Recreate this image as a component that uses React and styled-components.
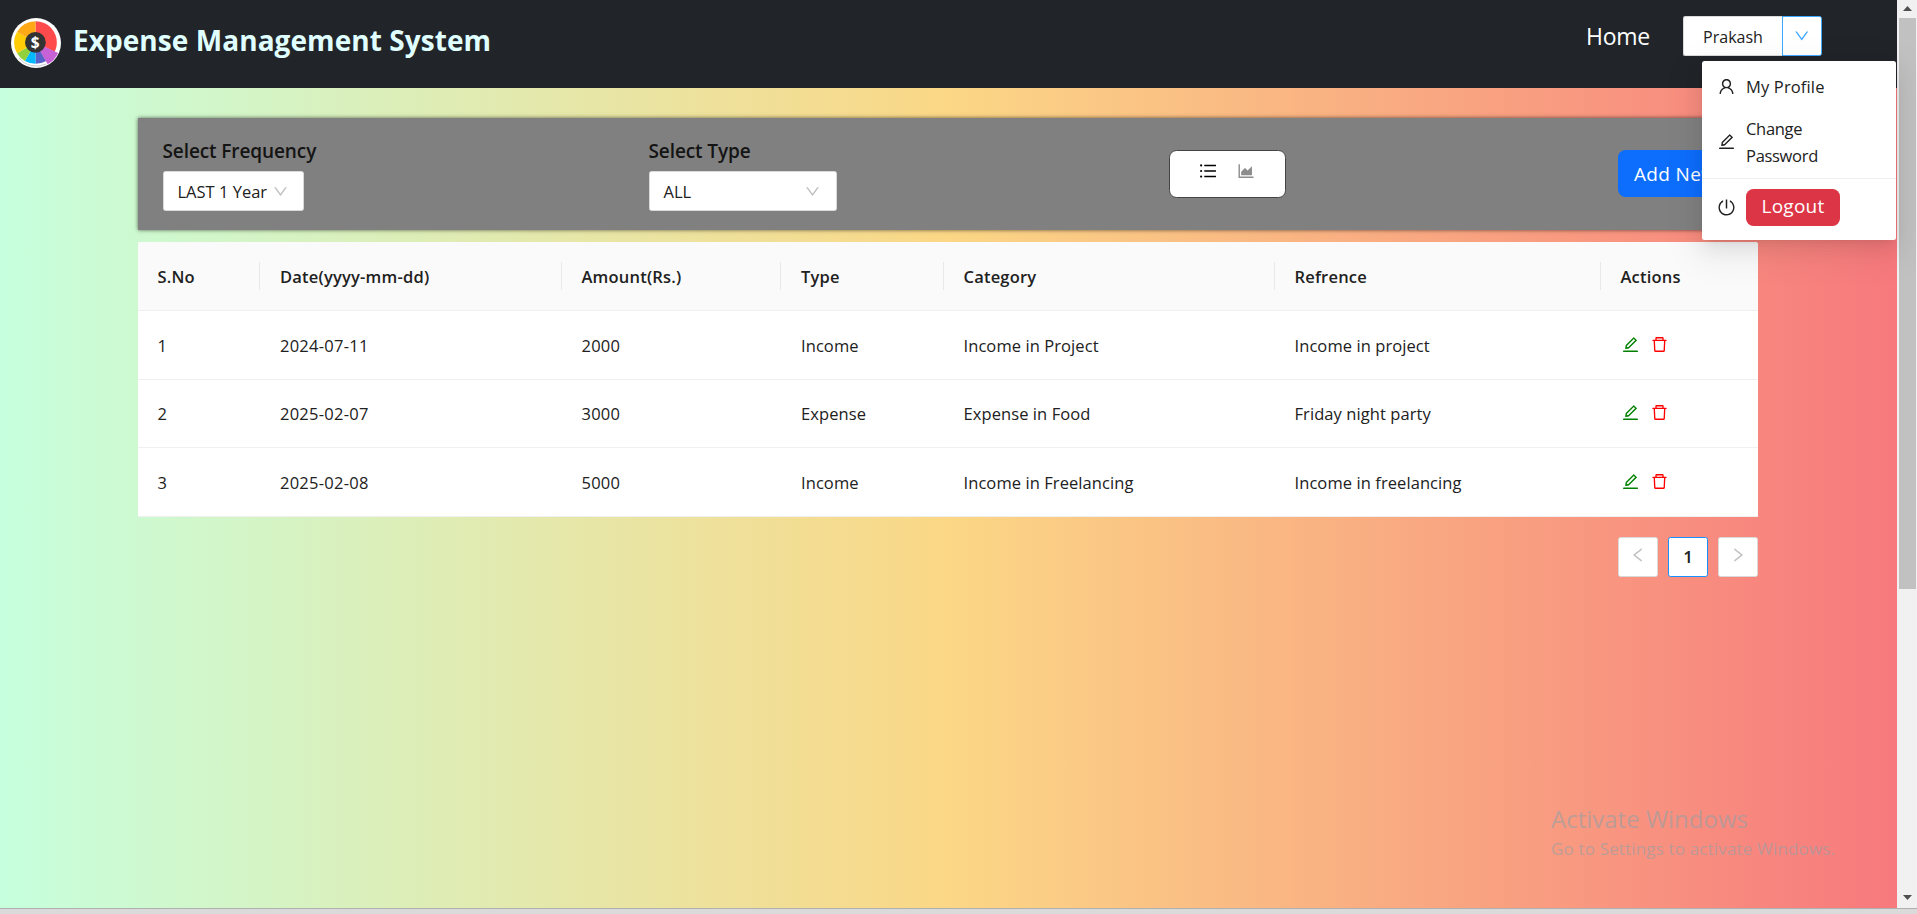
import React from 'react';
import styled, { createGlobalStyle } from 'styled-components';
import {
  AiOutlineUser, AiOutlineEdit, AiOutlineDelete, AiOutlinePoweroff, AiOutlineUnorderedList,
  AiOutlineAreaChart, AiOutlineDown, AiOutlineLeft, AiOutlineRight,
} from 'react-icons/ai';

const GlobalStyle = createGlobalStyle`
  * { box-sizing: border-box; }
  body {
    margin: 0;
    overflow: hidden;
    font-family: "Open Sans", "Noto Sans", sans-serif;
    font-size: 16.5px;
    color: #212121;
  }
  svg { display: block; flex: none; }
  button { font-family: inherit; cursor: pointer; }
`;

const Screen = styled.div`
  display: flex;
  flex-direction: column;
  height: 914px;
`;

const Viewport = styled.div`
  flex: 1;
  display: flex;
  min-height: 0;
`;

const Page = styled.div`
  position: relative;
  flex: 1;
  background: linear-gradient(to right, #c6ffdd, #fbd786, #f7797d);
`;

const Header = styled.header`
  display: flex;
  align-items: flex-start;
  height: 88px;
  padding-left: 10px;
  background: #212529;
`;

const Logo = styled.svg`
  width: 52px;
  height: 52px;
  margin-top: 17px;
`;

const Title = styled.h1`
  margin: 20px 0 0 11px;
  font-size: 28px;
  line-height: 40px;
  font-weight: 700;
  letter-spacing: 0.06px;
  color: #e0ffff;
`;

const Nav = styled.nav`
  display: flex;
  align-items: flex-start;
  margin-left: auto;
  padding: 16px 75px 0 0;
`;

const NavLink = styled.a`
  margin-right: 33px;
  padding-top: 1px;
  font-size: 23px;
  line-height: 38px;
  letter-spacing: -0.25px;
  color: #fff;
`;

const Account = styled.div`
  position: relative;
  display: flex;
`;

const AccountName = styled.button`
  width: 99px;
  height: 40px;
  padding: 1px 0 0;
  border: 1px solid #d9d9d9;
  border-right: 0;
  border-radius: 2.5px 0 0 2.5px;
  background: #fff;
  font-size: 16px;
  color: #212121;
`;

const AccountToggle = styled.button`
  display: grid;
  place-items: center;
  width: 40px;
  height: 40px;
  padding: 0;
  border: 1px solid #40a9ff;
  border-radius: 0 2.5px 2.5px 0;
  background: #fff;
  color: #40a9ff;
  font-size: 17.5px;
`;

const Menu = styled.div`
  position: absolute;
  z-index: 5;
  top: 45px;
  left: 19px;
  width: 194px;
  height: 179px;
  padding: 5px 0;
  border-radius: 2.5px;
  background: #fff;
  box-shadow: 0 4px 8px -5px rgba(0,0,0,.12), 0 8px 20px rgba(0,0,0,.08), 0 11px 35px 10px rgba(0,0,0,.05);
`;

const MenuItem = styled.div`
  display: flex;
  align-items: center;
  gap: 10px;
  padding: 6px 50px 7px 15px;
  line-height: 27.5px;

  > svg { font-size: 19px; }
  > svg + * { padding-top: ${p => (p.$flush ? '0' : '1px')}; }
`;

const MenuLabel = styled.span`
  letter-spacing: ${p => p.$spacing || '0'};
`;

const MenuDivider = styled.div`
  height: 1px;
  margin: 1px 0 4px;
  background: #f0f0f0;
`;

const LogoutButton = styled.button`
  width: 94px;
  height: 37px;
  border: 0;
  border-radius: 7.5px;
  background: #dc3545;
  color: #fff;
  font-size: 19px;
  letter-spacing: 0.25px;
  line-height: 35px;
`;

const Main = styled.main`
  width: 1620.5px;
  margin: 30px 0 0 137.5px;
`;

const Filters = styled.section`
  display: flex;
  align-items: flex-start;
  height: 112px;
  padding: 18px 25px 0;
  background: gray;
  box-shadow: 0 0 4px rgba(0,0,0,.6);
`;

const Field = styled.div`
  width: ${p => p.$width};
`;

const FieldLabel = styled.h6`
  margin: 0 0 5px;
  font-size: 19px;
  font-weight: 600;
  line-height: 30px;
  letter-spacing: -0.1px;
  color: #141414;
`;

const Select = styled.div`
  display: flex;
  align-items: center;
  justify-content: space-between;
  width: ${p => p.$width};
  height: 40px;
  padding: 0 14px;
  border: 1px solid #d9d9d9;
  border-radius: 2.5px;
  background: #fff;

  > svg { font-size: 17px; color: #bfbfbf; margin-right: ${p => p.$arrowInset || '0'}; }
`;

const ViewSwitch = styled.div`
  display: flex;
  gap: 18px;
  width: 117px;
  height: 48px;
  margin: 14px 0 0 34.5px;
  padding: 10px 0 0 28px;
  border: 1px solid #444;
  border-radius: 7.5px;
  background: #fff;
  font-size: 20px;
  color: #000;

  > svg + svg { color: #8c8c8c; }
`;

const AddButton = styled.button`
  width: 115px;
  height: 47px;
  margin: 14px 0 0 auto;
  padding: 1px 0 0 16px;
  border: 0;
  border-radius: 7.5px;
  background: #0d6efd;
  color: #fff;
  font-size: 19px;
  letter-spacing: 0.35px;
  text-align: left;
  white-space: nowrap;
`;

const Table = styled.table`
  width: 100%;
  margin-top: 12px;
  border-collapse: separate;
  border-spacing: 0;
  table-layout: fixed;
  border-radius: 2.5px 2.5px 0 0;
  overflow: hidden;
  background: #fff;
`;

const Column = styled.col`
  width: ${p => p.$width};
`;

const HeadCell = styled.th`
  height: 69px;
  padding: 0;
  border-bottom: 1px solid #f0f0f0;
  background: #fafafa;
  text-align: left;
  font-weight: 600;
  letter-spacing: 0.2px;
  color: #212121;
`;

const HeadLabel = styled.div`
  height: 28px;
  padding: 0 0 0 20px;
  border-right: ${p => (p.$last ? '0' : '1px solid #e8e8e8')};
  line-height: 29px;
`;

const Cell = styled.td`
  height: 68.5px;
  padding: 1px 20px 0;
  border-bottom: 1px solid #f0f0f0;
  letter-spacing: ${p => (p.$numeric ? '0.25px' : '0.08px')};
  white-space: nowrap;
`;

const RowActions = styled.div`
  display: flex;
  gap: 10px;
  padding-bottom: 2px;
  font-size: 19px;

  > :first-child { color: green; }
  > :last-child { color: red; }
`;

const Pagination = styled.div`
  display: flex;
  justify-content: flex-end;
  gap: 10px;
  margin-top: 20px;
`;

const PageButton = styled.button`
  display: grid;
  place-items: center;
  width: 40px;
  height: 40px;
  padding: 0;
  border: 1px solid ${p => (p.$active ? '#1890ff' : '#d9d9d9')};
  border-radius: 2.5px;
  background: #fff;
  color: ${p => (p.$active ? '#212121' : '#bfbfbf')};
  font-size: 17px;
  font-weight: 600;

  > svg { font-size: 18px; margin-bottom: 4px; }
`;

const Watermark = styled.div`
  position: absolute;
  left: 1551px;
  top: 802px;
  color: rgba(150, 160, 165, .62);
`;

const WatermarkTitle = styled.div`
  font-size: 24px;
  line-height: 34px;
`;

const WatermarkText = styled.div`
  font-size: 17px;
  line-height: 25px;
  letter-spacing: 0.16px;
`;

const Scrollbar = styled.div`
  display: flex;
  flex-direction: column;
  align-items: center;
  width: 20px;
  padding: 6px 0 8px;
  background: #f1f1f1;
`;

const ScrollThumb = styled.div`
  width: 17px;
  height: 571px;
  margin: 7px 0 auto;
  background: #c1c1c1;
`;

const ScrollArrow = styled.svg`
  width: 9px;
  height: 5px;
  fill: #505050;
`;

const BottomEdge = styled.div`
  height: 6px;
  border-top: 1px solid #b0b0b0;
  background: #dadada;
`;

const point = (r, deg) => {
  const a = (deg * Math.PI) / 180;
  return `${(25.5 + r * Math.sin(a)).toFixed(2)} ${(25.5 - r * Math.cos(a)).toFixed(2)}`;
};
const wedge = (r, from, to) => `M25.5 25.5L${point(r, from)}A${r} ${r} 0 0 1 ${point(r, to)}Z`;

const WEDGES = [
  ['#ff4b4b', 0, 116, 21.3],
  ['#5562c9', 150, 180, 21.3],
  ['#00b9ff', 180, 210, 21.3],
  ['#92d13e', 210, 240, 21.3],
  ['#ffcc05', 240, 300, 21.3],
  ['#ffa916', 300, 360, 21.3],
  ['#c661d6', 115, 151, 25],
];

const COLUMNS = [
  ['S.No', '122.5px'],
  ['Date(yyyy-mm-dd)', '301.5px'],
  ['Amount(Rs.)', '219.5px'],
  ['Type', '162.5px'],
  ['Category', '331px'],
  ['Refrence', '326px'],
  ['Actions', '157.5px'],
];

const ROWS = [
  ['1', '2024-07-11', '2000', 'Income', 'Income in Project', 'Income in project'],
  ['2', '2025-02-07', '3000', 'Expense', 'Expense in Food', 'Friday night party'],
  ['3', '2025-02-08', '5000', 'Income', 'Income in Freelancing', 'Income in freelancing'],
];

export default function App() {
  return (
    <>
      <GlobalStyle />
      <Screen>
        <Viewport>
          <Page>
            <Header>
              <Logo viewBox="0 0 52 52">
                <circle cx="26" cy="26" r="25" fill="#fff" />
                <path d="M9 41A22.5 22.5 0 0 0 36 47" fill="none" stroke="#c9c9cc" strokeWidth="1" />
                {WEDGES.map(([fill, from, to, r]) => (
                  <path key={fill} d={wedge(r, from, to)} fill={fill} />
                ))}
                <circle cx="25.4" cy="25.4" r="10.4" fill="#333" />
                <text x="25.3" y="31.2" textAnchor="middle" fontFamily="Open Sans, sans-serif" fontWeight="700" fontSize="15.5" fill="#fff">$</text>
              </Logo>
              <Title>Expense Management System</Title>
              <Nav>
                <NavLink>Home</NavLink>
                <Account>
                  <AccountName>Prakash</AccountName>
                  <AccountToggle><AiOutlineDown /></AccountToggle>
                  <Menu>
                    <MenuItem>
                      <AiOutlineUser />
                      <MenuLabel $spacing="0.14px">My Profile</MenuLabel>
                    </MenuItem>
                    <MenuItem>
                      <AiOutlineEdit />
                      <MenuLabel $spacing="-0.3px">Change Password</MenuLabel>
                    </MenuItem>
                    <MenuDivider />
                    <MenuItem $flush>
                      <AiOutlinePoweroff />
                      <LogoutButton>Logout</LogoutButton>
                    </MenuItem>
                  </Menu>
                </Account>
              </Nav>
            </Header>
            <Main>
              <Filters>
                <Field $width="486px">
                  <FieldLabel>Select Frequency</FieldLabel>
                  <Select $width="141px">LAST 1 Year<AiOutlineDown /></Select>
                </Field>
                <Field $width="486px">
                  <FieldLabel>Select Type</FieldLabel>
                  <Select $width="188px" $arrowInset="1px">ALL<AiOutlineDown /></Select>
                </Field>
                <ViewSwitch>
                  <AiOutlineUnorderedList />
                  <AiOutlineAreaChart />
                </ViewSwitch>
                <AddButton>Add New</AddButton>
              </Filters>
              <Table>
                <colgroup>
                  {COLUMNS.map(([name, width]) => <Column key={name} $width={width} />)}
                </colgroup>
                <thead>
                  <tr>
                    {COLUMNS.map(([name], i) => (
                      <HeadCell key={name}>
                        <HeadLabel $last={i === COLUMNS.length - 1}>{name}</HeadLabel>
                      </HeadCell>
                    ))}
                  </tr>
                </thead>
                <tbody>
                  {ROWS.map(row => (
                    <tr key={row[0]}>
                      {row.map((value, i) => <Cell key={i} $numeric={i < 3}>{value}</Cell>)}
                      <Cell>
                        <RowActions>
                          <AiOutlineEdit />
                          <AiOutlineDelete />
                        </RowActions>
                      </Cell>
                    </tr>
                  ))}
                </tbody>
              </Table>
              <Pagination>
                <PageButton><AiOutlineLeft /></PageButton>
                <PageButton $active>1</PageButton>
                <PageButton><AiOutlineRight /></PageButton>
              </Pagination>
            </Main>
            <Watermark>
              <WatermarkTitle>Activate Windows</WatermarkTitle>
              <WatermarkText>Go to Settings to activate Windows.</WatermarkText>
            </Watermark>
          </Page>
          <Scrollbar>
            <ScrollArrow viewBox="0 0 9 5"><path d="M0 5L4.5 0L9 5Z" /></ScrollArrow>
            <ScrollThumb />
            <ScrollArrow viewBox="0 0 9 5"><path d="M0 0L4.5 5L9 0Z" /></ScrollArrow>
          </Scrollbar>
        </Viewport>
        <BottomEdge />
      </Screen>
    </>
  );
}
